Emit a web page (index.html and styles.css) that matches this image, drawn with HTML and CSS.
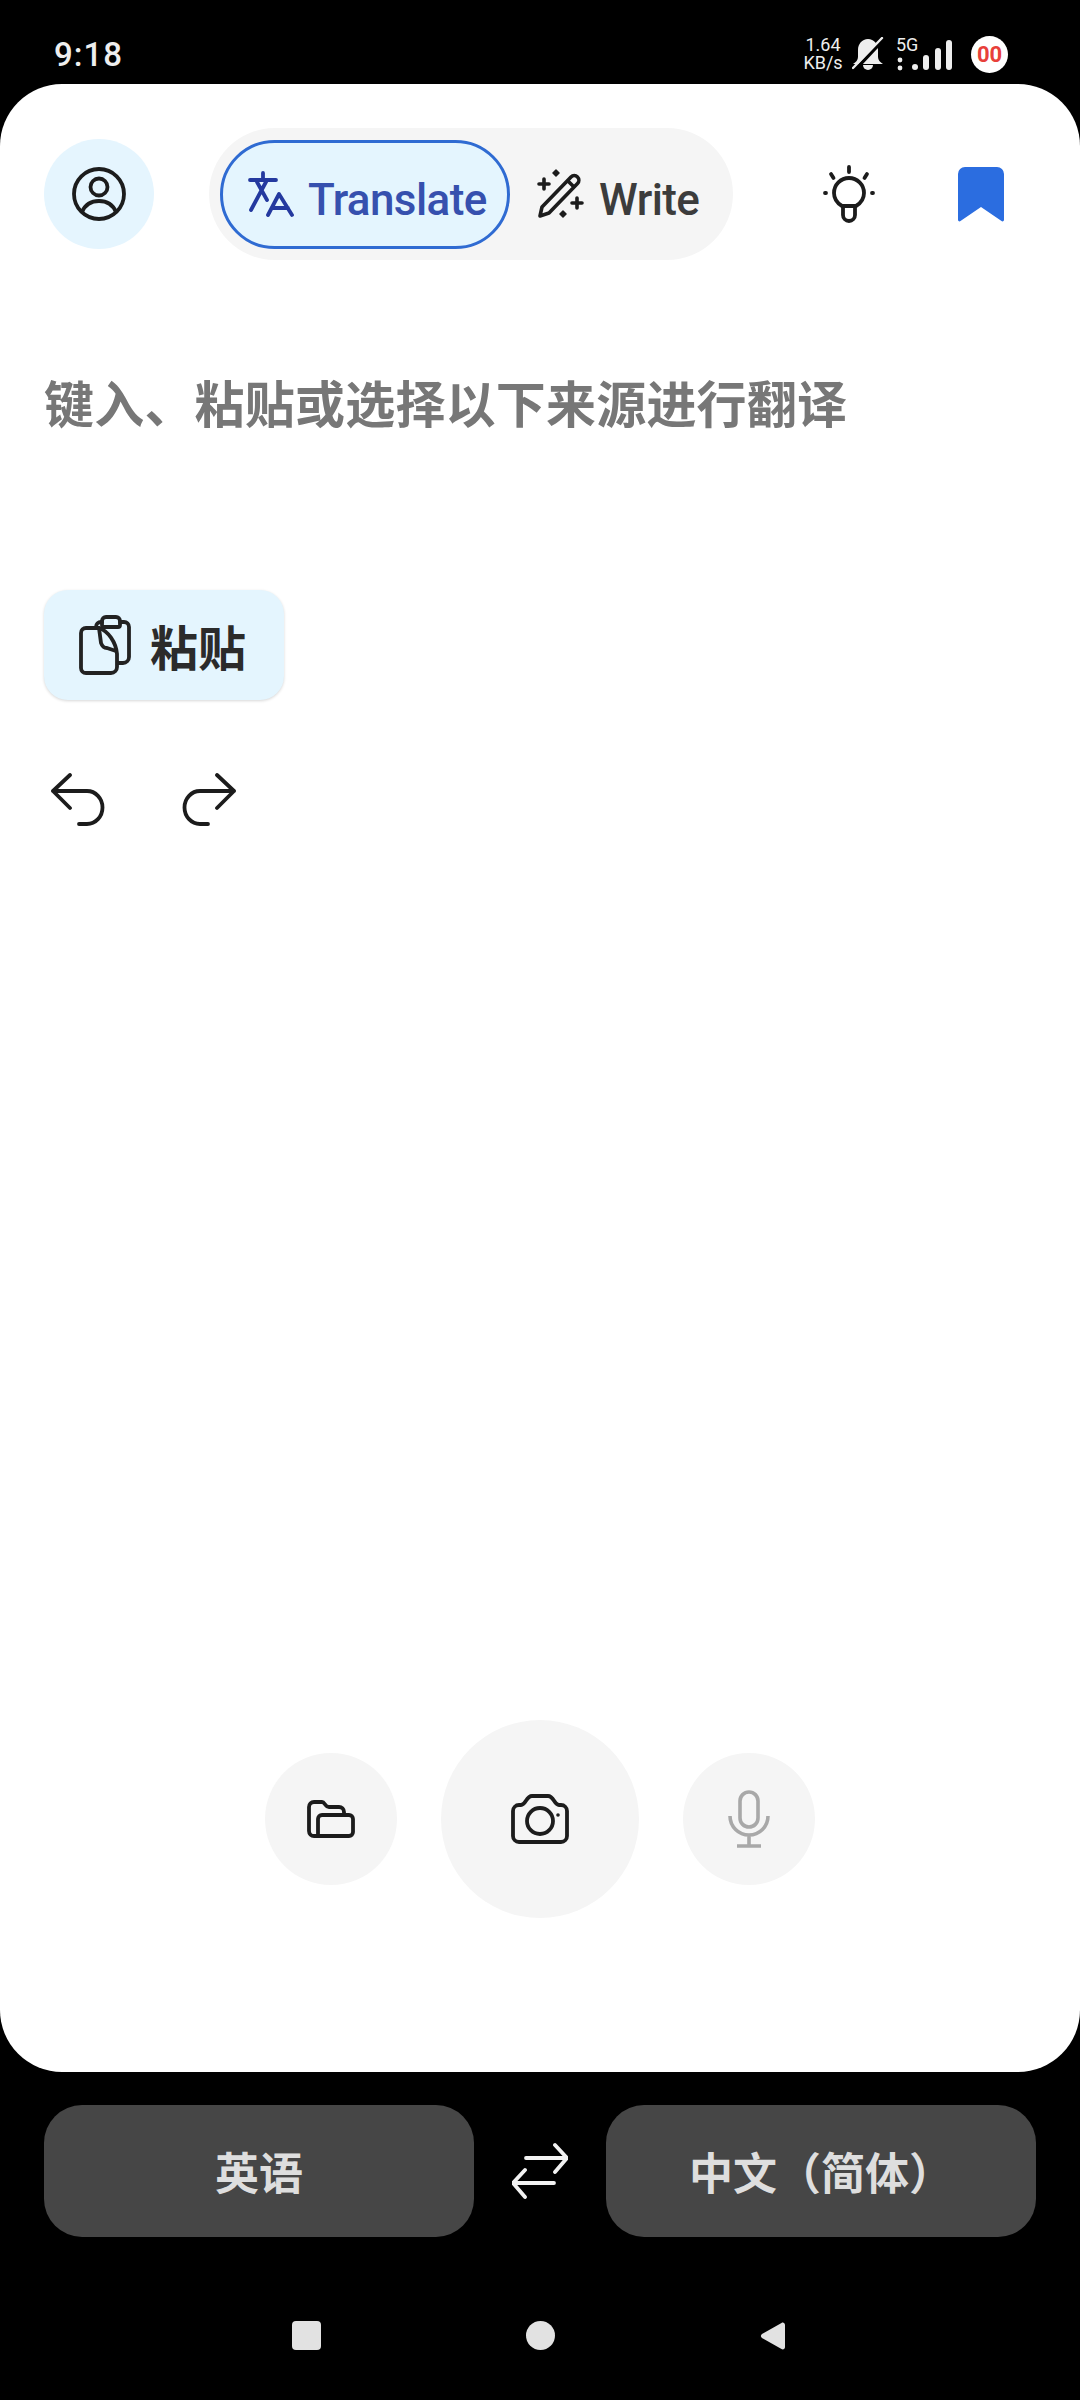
FILE: index.html
```html
<!DOCTYPE html>
<html lang="zh">
<head>
    <meta charset="UTF-8">
    <meta name="viewport" content="width=device-width, initial-scale=1.0">
    <title>Translate</title>
    <link rel="stylesheet" href="styles.css">
</head>
<body>
    <div class="status-bar">
        <span class="time">9:18</span>
        <div class="status-right">
            <div class="speed"><span>1.64</span><span>KB/s</span></div>
            <svg class="bell" width="32" height="34" viewBox="0 0 32 34">
                <path d="M16 2c-6 0-10 5-10 11v7c0 3-2 5-5 7h30c-3-2-5-4-5-7v-7c0-6-4-11-10-11z" fill="#eee"/>
                <path d="M11 28a5 5 0 0 0 10 0z" fill="#eee"/>
                <path d="M1 35L33 1" stroke="#000" stroke-width="3.500"/>
                <path d="M1 31L30 1" stroke="#eee" stroke-width="2.4" stroke-linecap="round"/>
            </svg>
            <div class="network">
                <span class="net-label">5G</span>
                <svg width="20" height="18" viewBox="0 0 20 18"><circle cx="4" cy="6" r="2.4" fill="#eee"/><circle cx="4" cy="14" r="2.4" fill="#eee"/></svg>
            </div>
            <svg class="signal" width="44" height="36" viewBox="0 0 44 36">
                <rect x="1" y="28" width="6" height="6" rx="3" fill="#eee"/>
                <rect x="12" y="19" width="6" height="15" rx="3" fill="#eee"/>
                <rect x="24" y="12" width="6" height="22" rx="3" fill="#eee"/>
                <rect x="35" y="4" width="6" height="30" rx="3" fill="#eee"/>
            </svg>
            <span class="rec-badge">00</span>
        </div>
    </div>

    <main class="sheet">
        <header class="top-row">
            <div class="avatar">
                <svg width="56" height="56" viewBox="0 0 56 56" fill="none" stroke="#1c1c1c" stroke-width="3.8">
                    <circle cx="28" cy="28" r="25"/>
                    <circle cx="28" cy="21" r="8.5"/>
                    <path d="M11 46c3-7 9-11 17-11s14 4 17 11"/>
                </svg>
            </div>
            <div class="mode-switch">
                <div class="mode mode-active">
                    <svg width="48" height="48" viewBox="0 0 48 48" fill="none" stroke="#24399f" stroke-width="3.8" stroke-linecap="round" stroke-linejoin="round">
                        <path d="M2 10h26M15 3v7M19 10L3 40M9 12l10 18M20 45l11-21 13 21M24 38h16"/>
                    </svg>
                    <span class="mode-label">Translate</span>
                </div>
                <div class="mode">
                    <svg width="48" height="50" viewBox="0 0 48 50" fill="none" stroke="#1c1c1c" stroke-width="3.6" stroke-linecap="round" stroke-linejoin="round">
                        <path d="M3 47l2-9L34 8a4.6 4.6 0 0 1 6.5 0 4.6 4.6 0 0 1 0 6.5L12 44zM30.500 11.500l6.500 6.500"/>
                        <path d="M7 10v10M2 15h10M40 29v10M35 34h10"/>
                        <path d="M19 1l3 3-3 3-3-3zM26 42l3 3-3 3-3-3z" fill="#1c1c1c" stroke-width="1.500"/>
                    </svg>
                    <span class="mode-label">Write</span>
                </div>
            </div>
            <svg class="bulb" width="60" height="58" viewBox="0 0 60 58" fill="none" stroke="#1c1c1c" stroke-width="3.800" stroke-linecap="round" stroke-linejoin="round">
                <path d="M30 2v5M12 9l2.500 4M48 9l-2.500 4M6 28h1M53 28h1"/>
                <path d="M23 41c-5-3-8-8-8-13a15 15 0 0 1 30 0c0 5-3 10-8 13z"/>
                <path d="M24 41v9a6 6 0 0 0 12 0v-9"/>
            </svg>
            <svg class="bookmark" width="48" height="56" viewBox="0 0 48 56">
                <path d="M1 8a7 7 0 0 1 7-7h32a7 7 0 0 1 7 7v46a1.500 1.500 0 0 1-2.500 1L24 41 3.500 55A1.500 1.500 0 0 1 1 54z" fill="#2b6de0"/>
            </svg>
        </header>

        <p class="prompt">键入、粘贴或选择以下来源进行翻译</p>

        <div class="paste-btn">
            <svg width="54" height="60" viewBox="0 0 54 60" fill="none" stroke="#222" stroke-width="3.800" stroke-linejoin="round" stroke-linecap="round">
                <path d="M18 13v-1a5 5 0 0 1 5-5h1M42 7h4a5 5 0 0 1 5 5v30a6 6 0 0 1-6 6h-5"/>
                <path d="M24 6a4 4 0 0 1 4-4h10a4 4 0 0 1 4 4v4a2 2 0 0 1-2 2H26a2 2 0 0 1-2-2z"/>
                <path d="M8 13h13c9 3 17 14 18 26v13a6 6 0 0 1-6 6H8a5 5 0 0 1-5-5V18a5 5 0 0 1 5-5z"/>
                <path d="M21 13l2 15c1 3 3 5 6 5l9 3"/>
            </svg>
            <span>粘贴</span>
        </div>

        <div class="history">
            <svg width="56" height="54" viewBox="0 0 56 54" fill="none" stroke="#1c1c1c" stroke-width="3.800" stroke-linecap="round" stroke-linejoin="round">
                <path d="M19 2L2 18l17 17M2 18h34a15.500 16.500 0 0 1 0 33H28"/>
            </svg>
            <svg width="56" height="54" viewBox="0 0 56 54" fill="none" stroke="#1c1c1c" stroke-width="3.800" stroke-linecap="round" stroke-linejoin="round">
                <path d="M37 2l17 16-17 17M54 18H20a15.500 16.500 0 0 0 0 33h8"/>
            </svg>
        </div>

        <div class="source-row">
            <div class="source-btn">
                <svg width="48" height="38" viewBox="0 0 48 38" fill="none" stroke="#1c1c1c" stroke-width="3.800" stroke-linejoin="round">
                    <path d="M11 36H7a5 5 0 0 1-5-5V7a5 5 0 0 1 5-5h8c3 0 3 5 7 5h10a5 5 0 0 1 5 5v3"/>
                    <path d="M11 36V19a4 4 0 0 1 4-4h27a4 4 0 0 1 4 4v13a4 4 0 0 1-4 4z"/>
                </svg>
            </div>
            <div class="source-btn source-btn-big">
                <svg width="58" height="50" viewBox="0 0 58 50" fill="none" stroke="#1c1c1c" stroke-width="3.800" stroke-linejoin="round">
                    <path d="M8 48a6 6 0 0 1-6-6V17a6 6 0 0 1 6-6h2c5 0 5-9 11-9h16c6 0 6 9 11 9h2a6 6 0 0 1 6 6v25a6 6 0 0 1-6 6z"/>
                    <circle cx="29" cy="27" r="13"/>
                    <circle cx="47" cy="21" r="1.800" fill="#1c1c1c" stroke="none"/>
                </svg>
            </div>
            <div class="source-btn">
                <svg width="42" height="58" viewBox="0 0 42 58" fill="none" stroke="#a8a8a8" stroke-width="3.600">
                    <rect x="12" y="2" width="18" height="35" rx="9"/>
                    <path d="M2 26a19 19 0 0 0 38 0M21 45v10M9 56h24"/>
                </svg>
            </div>
        </div>
    </main>

    <div class="lang-row">
        <div class="lang-btn">英语</div>
        <svg width="56" height="58" viewBox="0 0 56 58" fill="none" stroke="#f2f2f2" stroke-width="3.800" stroke-linecap="round" stroke-linejoin="round">
            <path d="M14 16h41M43 3l12 13-12 14M42 41H1M13 28L1 41l12 14"/>
        </svg>
        <div class="lang-btn">中文（简体）</div>
    </div>

    <nav class="nav-bar">
        <span class="nav-square"></span>
        <span class="nav-circle"></span>
        <svg width="26" height="28" viewBox="0 0 26 28"><path d="M25 3v22c0 2-2 3-3.500 2L2 16c-1.500-1-1.500-3 0-4L21.500 1C23 0 25 1 25 3z" fill="#e2e2e2"/></svg>
    </nav>
</body>
</html>
```

FILE: styles.css
```css
* {
    box-sizing: border-box;
}
html, body {
    margin: 0;
    padding: 0;
}
body {
    width: 1080px;
    height: 2400px;
    background-color: #000;
    font-family: "Roboto", "Noto Sans CJK SC", sans-serif;
    overflow: hidden;
}
.status-bar {
    height: 84px;
    display: flex;
    align-items: center;
    justify-content: space-between;
    padding: 24px 72px 0 54px;
    color: #eee;
}
.time {
    font-size: 33px;
    font-weight: 500;
    letter-spacing: 1px;
}
.status-right {
    display: flex;
    align-items: center;
}
.speed {
    display: flex;
    flex-direction: column;
    align-items: center;
    font-size: 18px;
    line-height: 18px;
    width: 38px;
}
.bell {
    margin-left: 10px;
}
.network {
    display: flex;
    flex-direction: column;
    width: 24px;
    margin-left: 12px;
}
.net-label {
    font-size: 18px;
    line-height: 18px;
}
.signal {
    margin: 0 0 0 -9px;
}
.rec-badge {
    width: 37px;
    height: 37px;
    margin-left: 16px;
    border-radius: 50%;
    background-color: #fff;
    color: #e8403a;
    font-size: 22px;
    font-weight: 700;
    line-height: 37px;
    text-align: center;
}

.sheet {
    height: 1988px;
    display: flex;
    flex-direction: column;
    padding: 44px 44px 154px;
    background-color: #fff;
    border-radius: 62px;
}
.top-row {
    display: flex;
    align-items: center;
}
.avatar {
    width: 110px;
    height: 110px;
    display: flex;
    align-items: center;
    justify-content: center;
    border-radius: 50%;
    background-color: #e5f5fe;
}
.mode-switch {
    width: 524px;
    height: 132px;
    display: flex;
    align-items: center;
    margin-left: 55px;
    padding: 0 11px;
    background-color: #f5f5f5;
    border-radius: 66px;
}
.mode {
    display: flex;
    align-items: center;
    gap: 14px;
    padding-left: 27px;
    font-size: 44px;
    font-weight: 500;
    color: #3c3c3c;
}
.mode-label {
    margin-top: 11px;
    letter-spacing: -0.6px;
}
.mode-active {
    width: 290px;
    height: 109px;
    gap: 12px;
    padding-left: 25px;
    background-color: #e4f5fe;
    border: 3px solid #2f6bd2;
    border-radius: 55px;
    color: #3650ae;
}
.bulb {
    margin-left: 86px;
}
.bookmark {
    margin-left: 78px;
}

.prompt {
    margin: 116px 0 0;
    font-size: 50px;
    line-height: 60px;
    font-weight: 700;
    letter-spacing: 0.2px;
    color: #777;
}
.paste-btn {
    width: 240px;
    height: 110px;
    display: flex;
    align-items: center;
    gap: 18px;
    margin-top: 154px;
    padding-left: 34px;
    background-color: #e4f5fe;
    border-radius: 24px;
    box-shadow: 0 1px 3px rgba(0, 0, 0, 0.16);
    font-size: 48px;
    font-weight: 700;
    color: #2b2b2b;
}
.history {
    display: flex;
    gap: 73px;
    margin-top: 73px;
    padding-left: 7px;
}
.source-row {
    display: flex;
    align-items: center;
    justify-content: center;
    gap: 44px;
    margin-top: auto;
}
.source-btn {
    width: 132px;
    height: 132px;
    display: flex;
    align-items: center;
    justify-content: center;
    border-radius: 50%;
    background-color: #f5f5f5;
}
.source-btn-big {
    width: 198px;
    height: 198px;
}

.lang-row {
    display: flex;
    align-items: center;
    justify-content: space-between;
    margin-top: 33px;
    padding: 0 44px;
}
.lang-btn {
    width: 430px;
    height: 132px;
    display: flex;
    align-items: center;
    justify-content: center;
    background-color: #464646;
    border-radius: 38px;
    font-size: 44px;
    font-weight: 700;
    color: #dedede;
}
.nav-bar {
    display: flex;
    align-items: center;
    justify-content: center;
    gap: 205px;
    margin-top: 84px;
    padding-right: 2px;
}
.nav-square {
    width: 29px;
    height: 29px;
    background-color: #e2e2e2;
    border-radius: 4px;
}
.nav-circle {
    width: 29px;
    height: 29px;
    background-color: #e2e2e2;
    border-radius: 50%;
}
```
